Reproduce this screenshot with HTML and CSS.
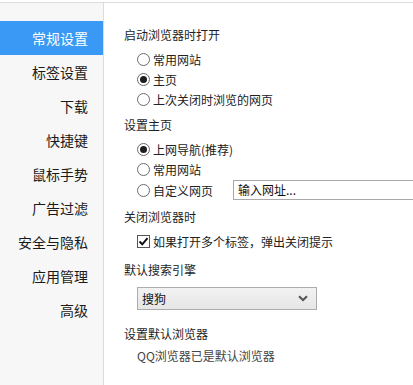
FILE: index.html
```html
<!DOCTYPE html>
<html lang="zh-CN">
<head>
<meta charset="utf-8">
<title>设置</title>
<link rel="stylesheet" href="styles.css">
</head>
<body>
<div class="window">
  <nav class="sidebar">
    <div class="nav-item active">常规设置</div>
    <div class="nav-item">标签设置</div>
    <div class="nav-item">下载</div>
    <div class="nav-item">快捷键</div>
    <div class="nav-item">鼠标手势</div>
    <div class="nav-item">广告过滤</div>
    <div class="nav-item">安全与隐私</div>
    <div class="nav-item">应用管理</div>
    <div class="nav-item">高级</div>
  </nav>
  <main class="content">
    <section class="group g-start">
      <h3 class="title">启动浏览器时打开</h3>
      <label class="opt"><span class="radio"></span>常用网站</label>
      <label class="opt"><span class="radio on"></span>主页</label>
      <label class="opt"><span class="radio"></span>上次关闭时浏览的网页</label>
    </section>
    <section class="group g-home">
      <h3 class="title">设置主页</h3>
      <label class="opt"><span class="radio on"></span>上网导航(推荐)</label>
      <label class="opt"><span class="radio"></span>常用网站</label>
      <div class="opt custom">
        <label class="opt-inline"><span class="radio"></span>自定义网页</label>
        <div class="url-input">输入网址...</div>
      </div>
    </section>
    <section class="group g-close">
      <h3 class="title">关闭浏览器时</h3>
      <label class="opt"><span class="checkbox"><svg width="11" height="11" viewBox="0 0 11 11"><path d="M1.5 5.5 L4.3 8.3 L9.5 2.2" fill="none" stroke="#111" stroke-width="2"/></svg></span>如果打开多个标签，弹出关闭提示</label>
    </section>
    <section class="group g-search">
      <h3 class="title">默认搜索引擎</h3>
      <div class="select">
        <span>搜狗</span>
        <svg width="10" height="7" viewBox="0 0 10 7"><path d="M1 1.2 L5 5 L9 1.2" fill="none" stroke="#555" stroke-width="2"/></svg>
      </div>
    </section>
    <section class="group g-default">
      <h3 class="title">设置默认浏览器</h3>
      <p class="note">QQ浏览器已是默认浏览器</p>
    </section>
  </main>
</div>
</body>
</html>
```
FILE: styles.css
```css
* { box-sizing: border-box; }
html, body {
  margin: 0;
  padding: 0;
  background: #fff;
  overflow: hidden;
}
body {
  font-family: "Noto Sans CJK SC", "Microsoft YaHei", sans-serif;
  font-size: 12px;
  color: #222;
  padding-top: 2px;
}
.window {
  display: flex;
  height: 383px;
  border-top: 1px solid #dcdcdc;
}
.sidebar {
  width: 104px;
  flex: none;
  background: #f7f7f7;
  border-right: 1px solid #dcdcdc;
  padding-top: 18px;
}
.nav-item {
  height: 34px;
  line-height: 34px;
  font-size: 14px;
  text-align: right;
  padding-right: 15px;
  color: #1a1a1a;
}
.nav-item.active {
  background: #3a99f4;
  color: #fff;
}
.content {
  flex: 1;
  padding: 22px 0 0 20px;
  min-width: 0;
  overflow: hidden;
}
.group { margin: 0; }
.title {
  margin: 0 0 4px;
  font-size: 12px;
  font-weight: normal;
  line-height: 20px;
  color: #1e1e1e;
}
.g-home { margin-top: 6px; }
.g-close { margin-top: 7px; }
.g-search { margin-top: 9px; }
.g-default { margin-top: 14px; }
.g-search .title { margin-bottom: 7px; }
.g-default .title { margin-bottom: 2px; }
.opt {
  display: flex;
  align-items: center;
  height: 20px;
  padding-left: 13px;
  white-space: nowrap;
}
.opt-inline {
  display: flex;
  align-items: center;
  width: 96px;
  flex: none;
}
.radio {
  width: 13px;
  height: 13px;
  border: 1px solid #6b6b6b;
  border-radius: 50%;
  background: #fff;
  margin-right: 3px;
  flex: none;
  display: flex;
  align-items: center;
  justify-content: center;
}
.radio.on::after {
  content: "";
  width: 7px;
  height: 7px;
  border-radius: 50%;
  background: #1e1e1e;
}
.checkbox {
  width: 13px;
  height: 13px;
  border: 1px solid #555;
  background: #fff;
  margin-right: 3px;
  flex: none;
  display: flex;
  align-items: center;
  justify-content: center;
}
.custom { margin-top: 1px; }
.url-input {
  flex: none;
  width: 200px;
  height: 20px;
  border: 1px solid #a9a9a9;
  border-right: none;
  line-height: 18px;
  padding-left: 4px;
  color: #111;
}
.select {
  margin-left: 13px;
  width: 180px;
  height: 23px;
  border: 1px solid #acacac;
  background: linear-gradient(#f2f2f2, #e6e6e6);
  display: flex;
  align-items: center;
  justify-content: space-between;
  padding: 0 8px 0 4px;
  color: #111;
}
.note {
  margin: 0;
  padding-left: 13px;
  line-height: 20px;
  color: #444;
}
```
